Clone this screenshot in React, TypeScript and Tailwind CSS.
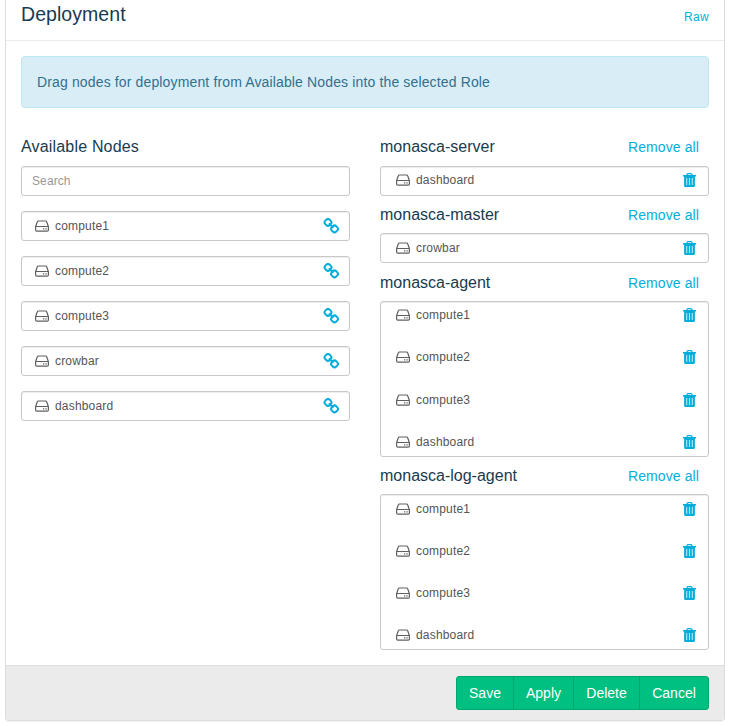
import React from "react";

function HddIcon() {
  return (
    <svg width="14" height="12" viewBox="0 0 14 12" fill="none" stroke="#606060" strokeWidth="1.2" className="shrink-0">
      <path d="M.6 6.6V9.9a1.2 1.2 0 0 0 1.2 1.2h10.4a1.2 1.2 0 0 0 1.2-1.2V6.6M.6 6.8L2.2 2Q2.5 1 3.5 1h7q1 0 1.3 1l1.6 4.8M.8 6.5h12.4" />
      <path d="M8 8.9h1.3M10.4 8.9h1.3" />
    </svg>
  );
}

function LinkIcon() {
  return (
    <svg width="16" height="16" viewBox="0 0 16 16" fill="none" stroke="#04aedb" strokeWidth="2" className="shrink-0">
      <rect x="1.9" y="1.3" width="6.2" height="6.2" rx="2.5" transform="rotate(45 5 4.4)" />
      <rect x="8.4" y="7.8" width="6.2" height="6.2" rx="2.5" transform="rotate(45 11.5 10.9)" />
      <path d="M5.9 5.4L10.4 9.7" />
    </svg>
  );
}

function TrashIcon() {
  return (
    <svg width="13" height="14" viewBox="0 0 13 14" className="shrink-0">
      <path d="M3.7 2.4L4.2 1.2Q4.4.7 5 .7h3q.6 0 .8.5l.5 1.2" fill="none" stroke="#04aedb" strokeWidth="1.2" />
      <path d="M0 2.1h13v1.5H0zM1.1 3h10.8v9.4q0 1.5-1.3 1.5H2.4Q1.1 13.9 1.1 12.4z" fill="#04aedb" />
      <path d="M3.7 5v7M6.5 5v7M9.3 5v7" stroke="#b5e8f6" strokeWidth="1.1" />
    </svg>
  );
}

const available = ["compute1", "compute2", "compute3", "crowbar", "dashboard"];
const roles = [
  { name: "monasca-server", nodes: ["dashboard"], box: "h-[30px] pt-1", head: "h-[38px] pt-[9px]" },
  { name: "monasca-master", nodes: ["crowbar"], box: "h-[30px] pt-[5px]", head: "h-[37px] pt-[9px]" },
  { name: "monasca-agent", nodes: ["compute1", "compute2", "compute3", "dashboard"], box: "h-[156px] pt-1 gap-[24.4px]", head: "h-[38px] pt-[10px]" },
  { name: "monasca-log-agent", nodes: ["compute1", "compute2", "compute3", "dashboard"], box: "h-[156px] pt-[5px] gap-6", head: "h-[37px] pt-[9px]" },
];
const field = "rounded-[3px] border border-[#c8c8c8] bg-white shadow-[inset_0_1px_1px_rgba(0,0,0,0.075)]";

export default function App() {
  return (
    <div className="h-[726px] w-[731px] overflow-hidden bg-white pl-[5px] font-['Liberation_Sans',sans-serif] text-[#555]">
      <div className="flex h-[721px] w-[720px] flex-col rounded-b-[4px] border border-t-0 border-[#ddd] shadow-[0_1px_1px_rgba(0,0,0,0.05)]">
        <header className="flex h-[41px] shrink-0 justify-between border-b border-[#ebebeb] px-[15px]">
          <h1 className="mt-[3px] text-[19.5px] leading-[22px] tracking-[0.06px] text-[#173b51]">Deployment</h1>
          <a className="mt-[9px] text-[12px] leading-4 tracking-[0.3px] text-[#04aedb]">Raw</a>
        </header>
        <main className="flex-1 px-[15px] pt-[15px]">
          <div className="flex h-[52px] items-center rounded-[4px] border border-[#bce8f1] bg-[#d9edf7] px-[15px] text-[14px] tracking-[0.14px] text-[#31708f]">
            Drag nodes for deployment from Available Nodes into the selected Role
          </div>
          <div className="mt-5 grid grid-cols-2 gap-[30px]">
            <section>
              <h2 className="h-[38px] pt-[9px] text-[16px] leading-5 tracking-[0.18px] text-[#173b51]">Available Nodes</h2>
              <input placeholder="Search" className={`${field} block h-[30px] w-full px-[10px] text-[12px] tracking-[0.1px] placeholder:text-[#999]`} />
              {available.map((name) => (
                <div key={name} className={`${field} mt-[15px] flex h-[30px] items-center pr-[10px] pl-[13px] text-[12px] tracking-[0.18px]`}>
                  <HddIcon />
                  <span className="ml-[6px] flex-1">{name}</span>
                  <LinkIcon />
                </div>
              ))}
            </section>
            <section>
              {roles.map((role) => (
                <div key={role.name}>
                  <div className={`${role.head} flex justify-between pr-[10px] leading-5`}>
                    <h2 className="text-[16px] text-[#173b51]">{role.name}</h2>
                    <a className="text-[14px] tracking-[0.1px] text-[#04aedb]">Remove all</a>
                  </div>
                  <div className={`${field} ${role.box} flex flex-col pr-3 pl-[15px]`}>
                    {role.nodes.map((name) => (
                      <div key={name} className="flex h-[18px] shrink-0 items-center text-[12px] tracking-[0.18px]">
                        <HddIcon />
                        <span className="ml-[6px] flex-1">{name}</span>
                        <TrashIcon />
                      </div>
                    ))}
                  </div>
                </div>
              ))}
            </section>
          </div>
        </main>
        <footer className="flex h-[55px] shrink-0 justify-end rounded-b-[3px] border-t border-[#ddd] bg-[#ebebeb] pt-[10px] pr-[15px]">
          <div className="flex h-[34px] overflow-hidden rounded-[3px] border border-[#00a76d] bg-[#00c081] text-[14px] text-white">
            <button className="w-[57px] border-r border-[#00a76d]">Save</button>
            <button className="w-[60px] border-r border-[#00a76d]">Apply</button>
            <button className="w-[66px] border-r border-[#00a76d]">Delete</button>
            <button className="w-[68px]">Cancel</button>
          </div>
        </footer>
      </div>
    </div>
  );
}
